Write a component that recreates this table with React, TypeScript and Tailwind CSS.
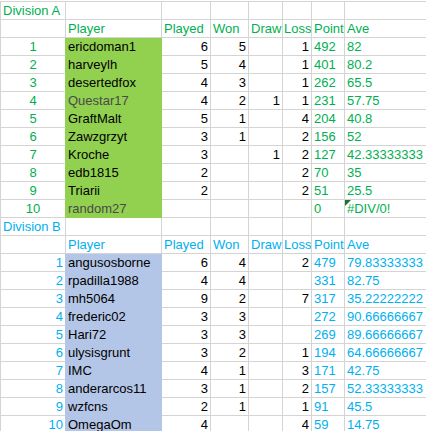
import React from "react";

type Row = {
  n: number;
  name: string;
  played?: number;
  won?: number;
  draw?: number;
  loss?: number;
  pts: number;
  ave: string;
  dim?: boolean;
  err?: boolean;
};

type Division = {
  title: string;
  text: string;
  fill: string;
  fillBorder: string;
  numBorder: string;
  numAlign: string;
  rows: Row[];
};

const divisions: Division[] = [
  {
    title: "Division A",
    text: "text-[#00b050]",
    fill: "bg-[#92d050]",
    fillBorder: "border-[#92d050]",
    numBorder: "border-b-[#d4d4d4] border-r-[#92d050]",
    numAlign: "text-center",
    rows: [
      { n: 1, name: "ericdoman1", played: 6, won: 5, loss: 1, pts: 492, ave: "82" },
      { n: 2, name: "harveylh", played: 5, won: 4, loss: 1, pts: 401, ave: "80.2" },
      { n: 3, name: "desertedfox", played: 4, won: 3, loss: 1, pts: 262, ave: "65.5" },
      { n: 4, name: "Questar17", played: 4, won: 2, draw: 1, loss: 1, pts: 231, ave: "57.75", dim: true },
      { n: 5, name: "GraftMalt", played: 5, won: 1, loss: 4, pts: 204, ave: "40.8" },
      { n: 6, name: "Zawzgrzyt", played: 3, won: 1, loss: 2, pts: 156, ave: "52" },
      { n: 7, name: "Kroche", played: 3, draw: 1, loss: 2, pts: 127, ave: "42.33333333" },
      { n: 8, name: "edb1815", played: 2, loss: 2, pts: 70, ave: "35" },
      { n: 9, name: "Triarii", played: 2, loss: 2, pts: 51, ave: "25.5" },
      { n: 10, name: "random27", pts: 0, ave: "#DIV/0!", dim: true, err: true },
    ],
  },
  {
    title: "Division B",
    text: "text-[#00b0f0]",
    fill: "bg-[#b4c6e7]",
    fillBorder: "border-[#b4c6e7]",
    numBorder: "border-b-[#d4d4d4] border-r-[#b4c6e7]",
    numAlign: "text-right",
    rows: [
      { n: 1, name: "angusosborne", played: 6, won: 4, loss: 2, pts: 479, ave: "79.83333333" },
      { n: 2, name: "rpadilla1988", played: 4, won: 4, pts: 331, ave: "82.75" },
      { n: 3, name: "mh5064", played: 9, won: 2, loss: 7, pts: 317, ave: "35.22222222" },
      { n: 4, name: "frederic02", played: 3, won: 3, pts: 272, ave: "90.66666667" },
      { n: 5, name: "Hari72", played: 3, won: 3, pts: 269, ave: "89.66666667" },
      { n: 6, name: "ulysisgrunt", played: 3, won: 2, loss: 1, pts: 194, ave: "64.66666667" },
      { n: 7, name: "IMC", played: 4, won: 1, loss: 3, pts: 171, ave: "42.75" },
      { n: 8, name: "anderarcos11", played: 3, won: 1, loss: 2, pts: 157, ave: "52.33333333" },
      { n: 9, name: "wzfcns", played: 2, won: 1, loss: 1, pts: 91, ave: "45.5" },
      { n: 10, name: "OmegaOm", played: 4, loss: 4, pts: 59, ave: "14.75" },
    ],
  },
];

const widths = ["w-[65px]", "w-[96px]", "w-[49px]", "w-[38px]", "w-[34px]", "w-[29px]", "w-[33px]", "w-[156px]"];
const headers = ["", "Player", "Played", "Won", "Draw", "Loss", "Points", "Ave"];

const Cell: React.FC<{ i: number; className?: string; border?: string; children?: React.ReactNode }> = ({
  i,
  className = "",
  border = "border-[#d4d4d4]",
  children,
}) => (
  <div
    className={`${widths[i]} relative shrink-0 h-[18px] border-r border-b ${border} px-[2px] leading-[17px] overflow-hidden whitespace-nowrap ${className}`}
  >
    {children}
  </div>
);

const DivisionBlock: React.FC<{ d: Division }> = ({ d }) => (
  <>
    <div className="flex">
      <Cell i={0} className={d.text}>
        {d.title}
      </Cell>
      {[1, 2, 3, 4, 5, 6, 7].map((i) => (
        <Cell key={i} i={i} />
      ))}
    </div>
    <div className="flex">
      {headers.map((h, i) => (
        <Cell key={i} i={i} className={`${d.text} ${i === 5 ? "!px-[1px]" : ""}`}>
          {h}
        </Cell>
      ))}
    </div>
    {d.rows.map((r) => (
      <div key={r.n} className="flex">
        <Cell i={0} className={`${d.text} ${d.numAlign}`} border={d.numBorder}>
          {r.n}
        </Cell>
        <Cell i={1} className={`${d.fill} ${r.dim ? "text-[#4a4a4a]" : "text-black"}`} border={d.fillBorder}>
          {r.name}
        </Cell>
        <Cell i={2} className="text-right text-black">
          {r.played}
        </Cell>
        <Cell i={3} className="text-right text-black">
          {r.won}
        </Cell>
        <Cell i={4} className="text-right text-black">
          {r.draw}
        </Cell>
        <Cell i={5} className="text-right text-black">
          {r.loss}
        </Cell>
        <Cell i={6} className={d.text}>
          {r.pts}
        </Cell>
        <Cell i={7} className={d.text}>
          {r.err && (
            <svg className="absolute left-0 top-0" width="6" height="6" viewBox="0 0 6 6">
              <polygon points="0,0 6,0 0,6" fill="#1e7034" />
            </svg>
          )}
          {r.ave}
        </Cell>
      </div>
    ))}
  </>
);

export default function App() {
  return (
    <div className="w-[426px] h-[431px] overflow-hidden bg-white pt-[1px] font-['Liberation_Sans',Arial,sans-serif] text-[13px]">
      <div className="w-[500px] border-t border-l border-[#d4d4d4]">
        {divisions.map((d) => (
          <DivisionBlock key={d.title} d={d} />
        ))}
      </div>
    </div>
  );
}
